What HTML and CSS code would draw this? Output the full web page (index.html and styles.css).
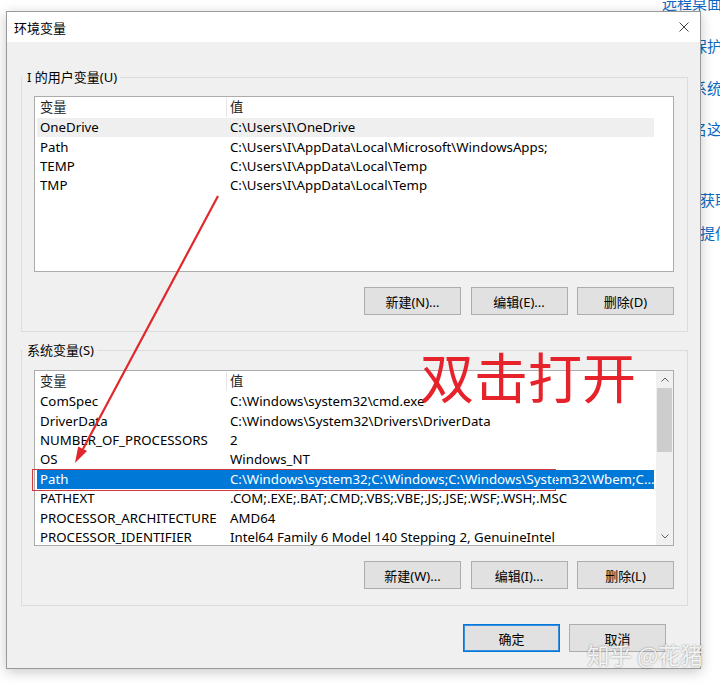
FILE: index.html
```html
<!DOCTYPE html>
<html lang="zh-CN">
<head>
    <meta charset="UTF-8">
    <meta name="viewport" content="width=device-width, initial-scale=1.0">
    <title>环境变量</title>
    <link rel="stylesheet" href="styles.css">
</head>
<body>
    <div class="desktop">
        <!-- окно настроек за диалогом -->
        <div class="bg-links">
            <div class="bg-link l1">远程桌面</div>
            <div class="bg-link l2">系统保护</div>
            <div class="bg-link l3">高级系统设置</div>
            <div class="bg-link l4">重命名这台电脑</div>
            <div class="bg-link l5 shift">如何获取帮助</div>
            <div class="bg-link l6 shift">帮助提供反馈</div>
        </div>

        <div class="dialog">
            <div class="titlebar">
                <span class="title">环境变量</span>
                <svg class="close" width="10" height="10" viewBox="0 0 10 10">
                    <path d="M0.5 0.5 L9.5 9.5 M9.5 0.5 L0.5 9.5" stroke="#444" stroke-width="1" fill="none"/>
                </svg>
            </div>

            <div class="dialog-body">
                <fieldset class="group">
                    <legend>I 的用户变量(U)</legend>
                    <div class="group-inner">
                        <div class="list">
                            <div class="list-view">
                                <div class="list-head">
                                    <div class="cell col-name">变量</div>
                                    <div class="cell">值</div>
                                </div>
                                <div class="list-row hover">
                                    <div class="cell">OneDrive</div>
                                    <div class="cell">C:\Users\I\OneDrive</div>
                                </div>
                                <div class="list-row">
                                    <div class="cell">Path</div>
                                    <div class="cell">C:\Users\I\AppData\Local\Microsoft\WindowsApps;</div>
                                </div>
                                <div class="list-row">
                                    <div class="cell">TEMP</div>
                                    <div class="cell">C:\Users\I\AppData\Local\Temp</div>
                                </div>
                                <div class="list-row">
                                    <div class="cell">TMP</div>
                                    <div class="cell">C:\Users\I\AppData\Local\Temp</div>
                                </div>
                            </div>
                        </div>
                        <div class="btn-row">
                            <button class="btn">新建(N)...</button>
                            <button class="btn">编辑(E)...</button>
                            <button class="btn">删除(D)</button>
                        </div>
                    </div>
                </fieldset>

                <fieldset class="group">
                    <legend>系统变量(S)</legend>
                    <div class="group-inner sys">
                        <div class="list">
                            <div class="list-view">
                                <div class="list-head">
                                    <div class="cell col-name">变量</div>
                                    <div class="cell">值</div>
                                </div>
                                <div class="list-row">
                                    <div class="cell">ComSpec</div>
                                    <div class="cell">C:\Windows\system32\cmd.exe</div>
                                </div>
                                <div class="list-row">
                                    <div class="cell">DriverData</div>
                                    <div class="cell">C:\Windows\System32\Drivers\DriverData</div>
                                </div>
                                <div class="list-row">
                                    <div class="cell">NUMBER_OF_PROCESSORS</div>
                                    <div class="cell">2</div>
                                </div>
                                <div class="list-row">
                                    <div class="cell">OS</div>
                                    <div class="cell">Windows_NT</div>
                                </div>
                                <div class="list-row selected">
                                    <div class="cell">Path</div>
                                    <div class="cell">C:\Windows\system32;C:\Windows;C:\Windows\System32\Wbem;C...</div>
                                </div>
                                <div class="list-row">
                                    <div class="cell">PATHEXT</div>
                                    <div class="cell">.COM;.EXE;.BAT;.CMD;.VBS;.VBE;.JS;.JSE;.WSF;.WSH;.MSC</div>
                                </div>
                                <div class="list-row">
                                    <div class="cell">PROCESSOR_ARCHITECTURE</div>
                                    <div class="cell">AMD64</div>
                                </div>
                                <div class="list-row">
                                    <div class="cell">PROCESSOR_IDENTIFIER</div>
                                    <div class="cell">Intel64 Family 6 Model 140 Stepping 2, GenuineIntel</div>
                                </div>
                            </div>
                            <div class="scrollbar">
                                <div class="sb-btn">
                                    <svg width="8" height="5" viewBox="0 0 8 5"><path d="M0.5 4.5 L4 1 L7.5 4.5" stroke="#606060" fill="none"/></svg>
                                </div>
                                <div class="sb-thumb"></div>
                                <div class="sb-track"></div>
                                <div class="sb-btn">
                                    <svg width="8" height="5" viewBox="0 0 8 5"><path d="M0.5 0.5 L4 4 L7.5 0.5" stroke="#606060" fill="none"/></svg>
                                </div>
                            </div>
                        </div>
                        <div class="btn-row">
                            <button class="btn">新建(W)...</button>
                            <button class="btn">编辑(I)...</button>
                            <button class="btn">删除(L)</button>
                        </div>
                    </div>
                </fieldset>

                <div class="footer">
                    <button class="btn default">确定</button>
                    <button class="btn">取消</button>
                </div>
            </div>
        </div>

        <!-- пометки поверх скриншота -->
        <svg class="arrow" width="720" height="687" viewBox="0 0 720 687">
            <line x1="218" y1="196" x2="83" y2="449" stroke="#e0282c" stroke-width="2.2"/>
            <polygon points="75,463 87,451 78.2,446.4" fill="#e0282c"/>
        </svg>
        <div class="mark-box"></div>
        <div class="mark-text">双击打开</div>
        <div class="watermark">知乎 @花猪</div>
    </div>
</body>
</html>
```

FILE: styles.css
```css
body {
    margin: 0;
    background: #fff;
    font-family: "Noto Sans", "Noto Sans CJK SC", sans-serif;
    font-size: 13px;
    color: #000;
}
.desktop {
    position: relative;
    width: 720px;
    height: 687px;
    overflow: hidden;
}
.bg-links {
    position: absolute;
    left: 662px;
    top: -6px;
    width: 80px;
    font-family: "Noto Sans CJK SC", sans-serif;
    font-size: 15px;
    line-height: 18px;
    color: #0b67c2;
    white-space: nowrap;
}
.bg-link.l2 { margin-top: 25px; }
.bg-link.l3 { margin-top: 24px; }
.bg-link.l4 { margin-top: 23px; }
.bg-link.l5 { margin-top: 53px; }
.bg-link.l6 { margin-top: 15px; }
.bg-link.shift { padding-left: 8px; }

.dialog {
    position: relative;
    z-index: 1;
    width: 695px;
    height: 658px;
    margin: 11px 0 0 6px;
    box-sizing: border-box;
    border: 1px solid #9a9a9a;
    background: #f0f0f0;
    box-shadow: 0 3px 12px rgba(0,0,0,0.22);
}
.titlebar {
    height: 30px;
    background: #fff;
    display: flex;
    align-items: center;
    justify-content: space-between;
    padding: 0 11px 0 7px;
}
.title {
    font-family: "Noto Sans CJK SC", sans-serif;
    font-size: 13px;
}
.dialog-body {
    padding: 0 12px 0 14px;
}
.group {
    margin: 26px 0 0;
    padding: 0;
    border: 1px solid #dcdcdc;
    min-width: 0;
}
.group + .group {
    margin-top: 9px;
}
.group legend {
    padding: 0 3px 0 5px;
    line-height: 18px;
    color: #000;
}
.group-inner {
    padding: 10px 13px 16px 12px;
}
.group-inner.sys {
    padding-top: 11px;
}
.list {
    height: 176px;
    box-sizing: border-box;
    border: 1px solid #acacac;
    background: #fff;
    display: flex;
    font-size: 13.25px;
}
.list-view {
    flex: 1;
    min-width: 0;
    overflow: hidden;
    padding-left: 2px;
}
.list-head,
.list-row {
    display: grid;
    grid-template-columns: 190px 1fr;
    width: 617px;
    align-items: center;
}
.list-head {
    height: 21px;
    color: #222;
}
.list-head .col-name {
    border-right: 1px solid #e5e5e5;
}
.list-row {
    height: 19.4px;
}
.cell {
    padding-left: 3px;
    white-space: nowrap;
    overflow: hidden;
    line-height: 19px;
}
.list-row.hover {
    background: #efefef;
}
.list-row.selected {
    background: #0078d7;
    color: #fff;
}
.scrollbar {
    width: 17px;
    background: #f0f0f0;
    display: flex;
    flex-direction: column;
}
.sb-btn {
    height: 17px;
    display: flex;
    align-items: center;
    justify-content: center;
}
.sb-thumb {
    height: 64px;
    margin: 0 1px;
    background: #cdcdcd;
}
.sb-track {
    flex: 1;
}
.btn-row {
    display: flex;
    justify-content: flex-end;
    gap: 9.5px;
    margin-top: 15px;
}
.btn {
    width: 97px;
    height: 28px;
    box-sizing: border-box;
    padding: 0;
    border: 1px solid #adadad;
    background: #e1e1e1;
    font: inherit;
    color: #000;
}
.btn.default {
    border-color: #0078d7;
    box-shadow: inset 0 0 0 1px #3a8ee0;
}
.footer {
    display: flex;
    justify-content: flex-end;
    gap: 9px;
    margin-top: 18px;
    padding-right: 22px;
}

.arrow {
    position: absolute;
    left: 0;
    top: 0;
    z-index: 2;
    pointer-events: none;
}
.mark-box {
    position: absolute;
    z-index: 2;
    left: 32px;
    top: 469px;
    width: 524px;
    height: 22px;
    box-sizing: border-box;
    border: 1.5px solid #d03a3c;
}
.mark-text {
    position: absolute;
    z-index: 2;
    left: 420px;
    top: 349px;
    font-family: "Noto Sans CJK SC", sans-serif;
    font-size: 54px;
    line-height: 1;
    color: #e6232b;
}
.watermark {
    position: absolute;
    z-index: 2;
    left: 587px;
    top: 643px;
    font-family: "Noto Sans CJK SC", sans-serif;
    font-size: 22.5px;
    line-height: 1;
    color: rgba(255,255,255,0.9);
    text-shadow: 0 0 2px rgba(0,0,0,0.45);
}
```
